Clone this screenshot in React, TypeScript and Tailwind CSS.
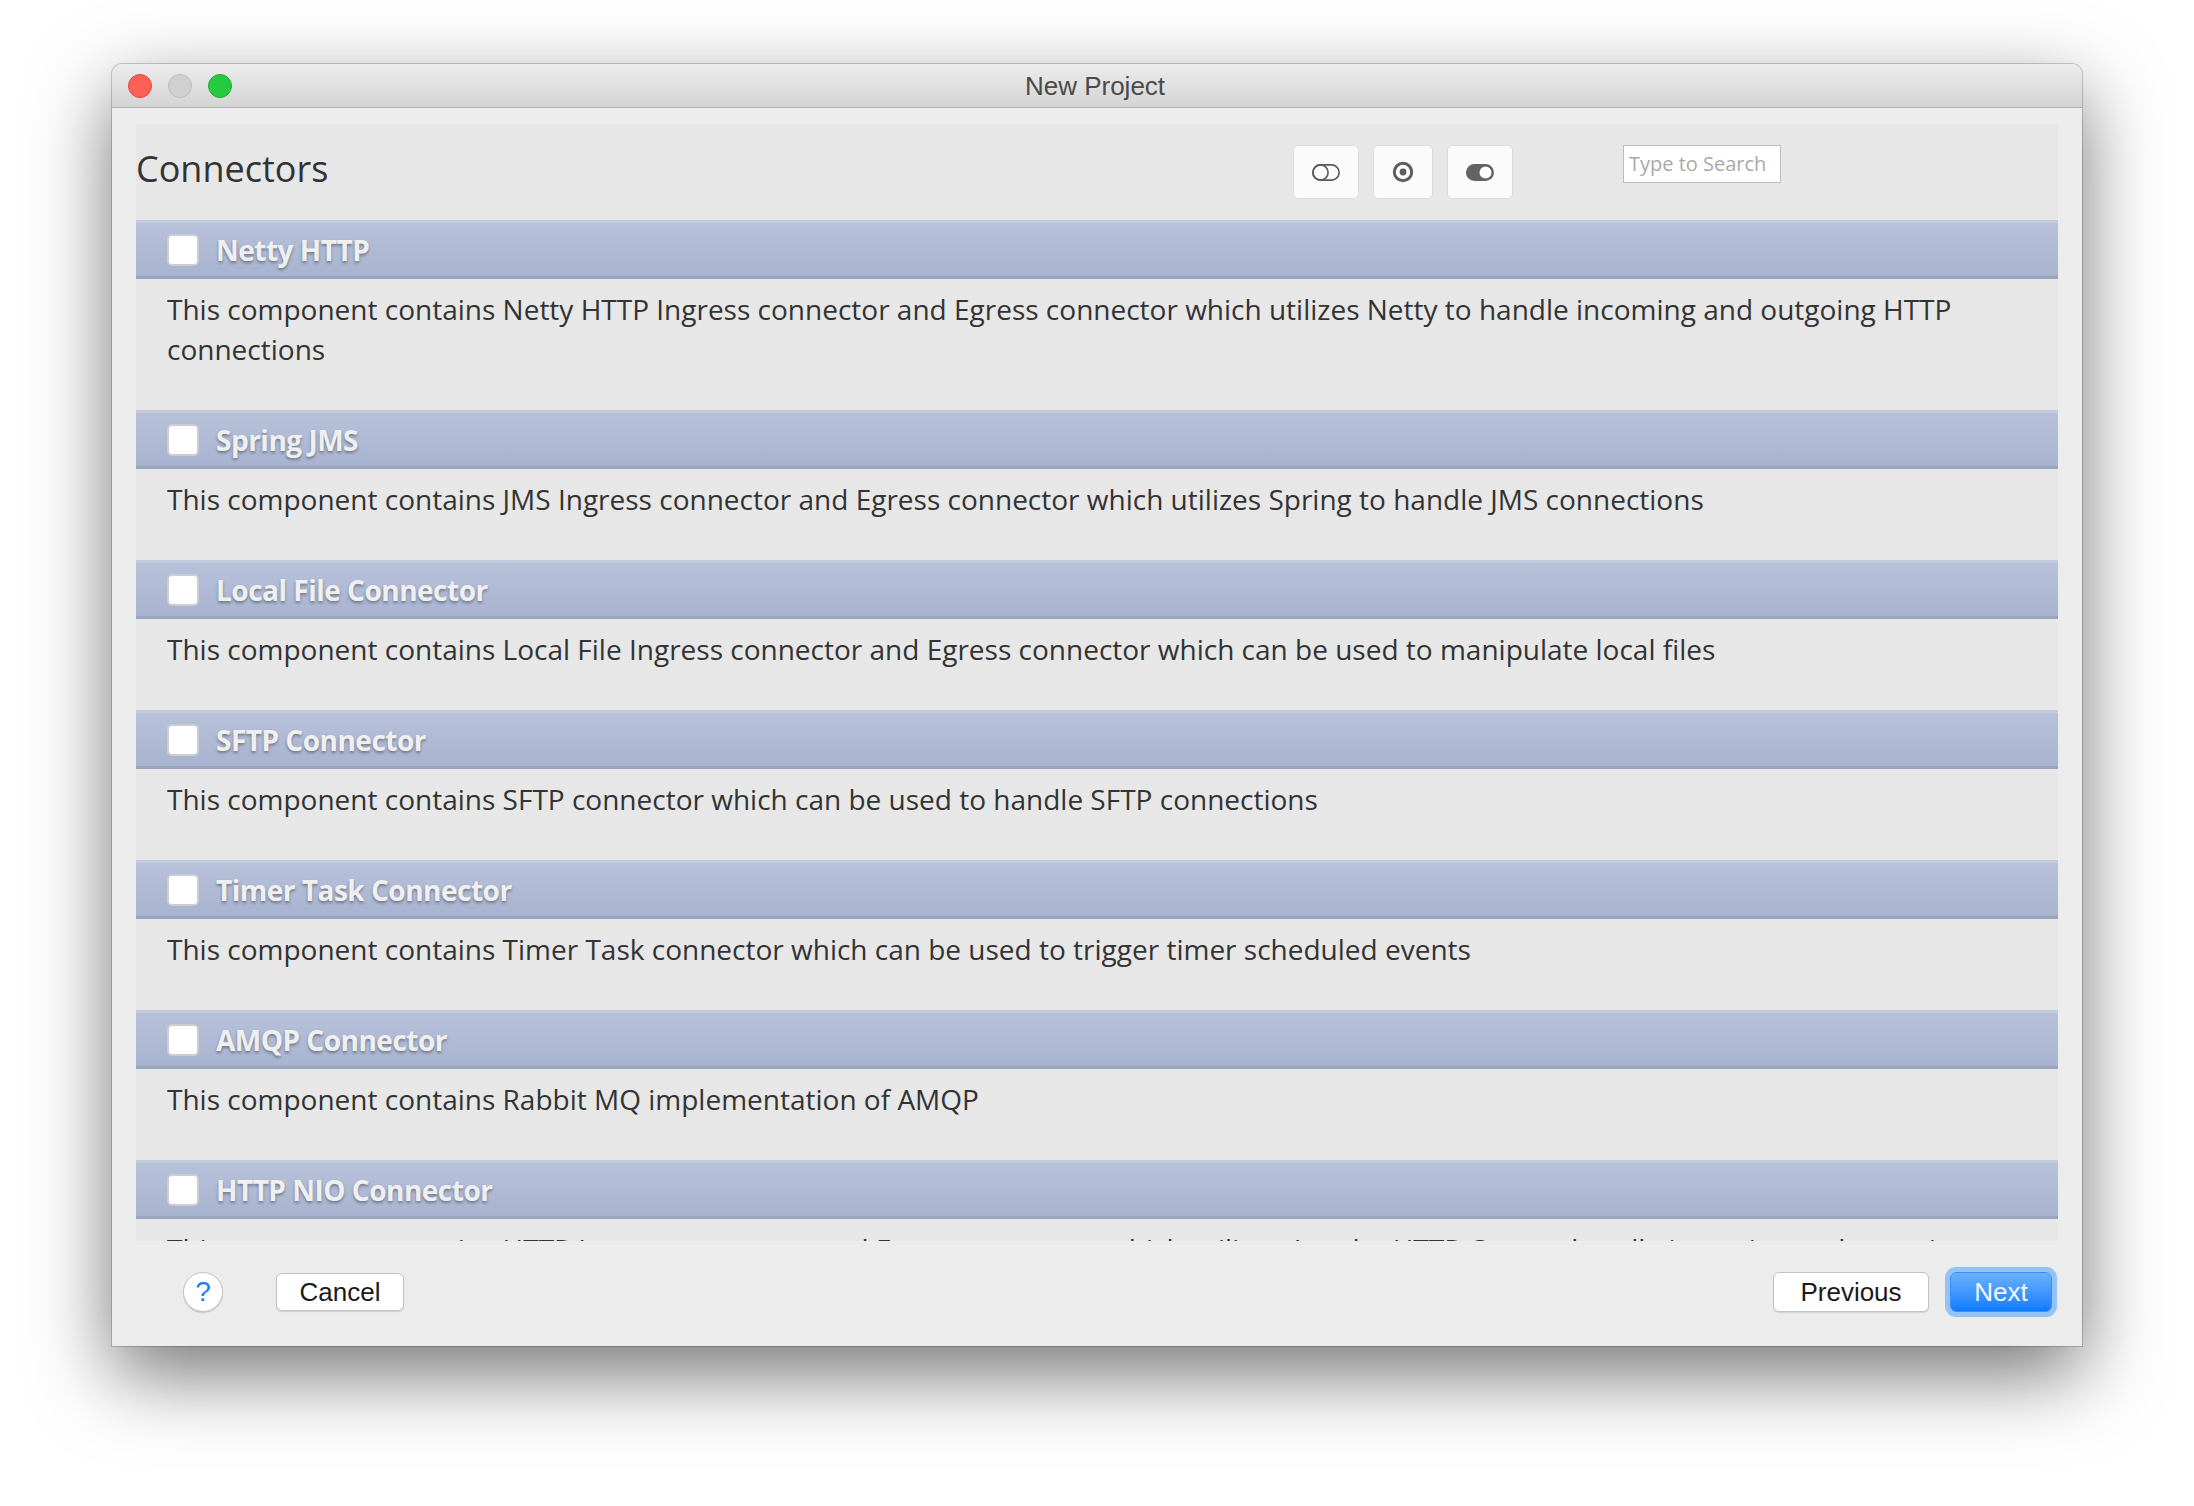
import React from 'react'

interface Connector {
  name: string
  description: string
}

const connectors: Connector[] = [
  {
    name: 'Netty HTTP',
    description:
      'This component contains Netty HTTP Ingress connector and Egress connector which utilizes Netty to handle incoming and outgoing HTTP connections',
  },
  {
    name: 'Spring JMS',
    description:
      'This component contains JMS Ingress connector and Egress connector which utilizes Spring to handle JMS connections',
  },
  {
    name: 'Local File Connector',
    description:
      'This component contains Local File Ingress connector and Egress connector which can be used to manipulate local files',
  },
  {
    name: 'SFTP Connector',
    description: 'This component contains SFTP connector which can be used to handle SFTP connections',
  },
  {
    name: 'Timer Task Connector',
    description: 'This component contains Timer Task connector which can be used to trigger timer scheduled events',
  },
  {
    name: 'AMQP Connector',
    description: 'This component contains Rabbit MQ implementation of AMQP',
  },
  {
    name: 'HTTP NIO Connector',
    description:
      'This component contains HTTP Ingress connector and Egress connector which utilizes Apache HTTP Core to handle incoming and outgoing HTTP connections',
  },
]

function ToggleOffIcon() {
  return (
    <svg width="28" height="17" viewBox="0 0 28 17" fill="none">
      <rect x="0.9" y="0.9" width="26.2" height="15.2" rx="7.6" stroke="#5a5a5a" strokeWidth="1.6" />
      <circle cx="8.5" cy="8.5" r="7.6" stroke="#5a5a5a" strokeWidth="1.6" />
    </svg>
  )
}

function RadioIcon() {
  return (
    <svg width="22" height="22" viewBox="0 0 22 22" fill="none">
      <circle cx="11" cy="11" r="8.7" stroke="#5e5e5e" strokeWidth="3" />
      <circle cx="11" cy="11" r="3.4" fill="#5e5e5e" />
    </svg>
  )
}

function ToggleOnIcon() {
  return (
    <svg width="28" height="17" viewBox="0 0 28 17" fill="none">
      <rect x="0" y="0" width="28" height="17" rx="8.5" fill="#636363" />
      <circle cx="19.5" cy="8.5" r="6.6" fill="#ffffff" stroke="#636363" strokeWidth="1.2" />
    </svg>
  )
}

function ToolButton({ children, wide }: { children: React.ReactNode; wide?: boolean }) {
  return (
    <div
      className={`${wide ? 'w-[66px]' : 'w-[60px]'} h-[54px] flex items-center justify-center bg-[#fbfbfb] border border-[#dcdcdc] rounded-[5px]`}
    >
      {children}
    </div>
  )
}

function ConnectorItem({ connector }: { connector: Connector }) {
  return (
    <div>
      <div className="h-[59px] flex items-center pl-[31px] border-t-[3px] border-t-[#c3cbdf] border-b-[3px] border-b-[#99a4bf] bg-gradient-to-b from-[#b7c1da] to-[#a8b3cf]">
        <div className="w-[32px] h-[32px] bg-white border-2 border-[#cbcdd2] rounded-[5px]" />
        <span className="ml-[17px] text-[28px] leading-[36px] font-bold tracking-[-0.5px] text-[#efefef] [text-shadow:0_2px_3px_rgba(0,0,0,0.35)] font-['Open_Sans',sans-serif]">
          {connector.name}
        </span>
      </div>
      <p className="pl-[31px] pr-[31px] pt-[10px] pb-[41px] text-[28px] leading-[40px] text-[#333333] font-['Open_Sans',sans-serif]">
        {connector.description}
      </p>
    </div>
  )
}

export default function App() {
  return (
    <div className="w-[2194px] h-[1506px] bg-white pt-[64px] pl-[112px] overflow-hidden">
      <div className="w-[1970px] h-[1282px] flex flex-col bg-[#ececec] rounded-t-[10px] shadow-[0_28px_80px_rgba(0,0,0,0.55),0_0_0_1px_rgba(0,0,0,0.18)]">
        {/* title bar */}
        <div className="h-[44px] flex items-center relative rounded-t-[10px] bg-gradient-to-b from-[#ececec] to-[#d4d4d4] border-b border-[#b1b1b1]">
          <div className="flex items-center gap-[16px] pl-[16px]">
            <div className="w-[24px] h-[24px] rounded-full bg-[#fe5f57] border border-[#e0443e]" />
            <div className="w-[24px] h-[24px] rounded-full bg-[#d0d0d0] border border-[#bdbdbd]" />
            <div className="w-[24px] h-[24px] rounded-full bg-[#28c940] border border-[#1dad2b]" />
          </div>
          <div className="flex-1 text-center pr-[124px] pt-[2px] text-[26px] text-[#4a4a4a] font-['Liberation_Sans',sans-serif]">
            New Project
          </div>
        </div>

        {/* body */}
        <div className="flex-1 flex flex-col px-[24px] pt-[16px]">
          <div className="h-[1117px] flex flex-col bg-[#e7e7e7]">
            <div className="h-[96px] shrink-0 flex items-start">
              <h1 className="mt-[27px] text-[36px] leading-[36px] text-[#333333] font-['Open_Sans',sans-serif]">
                Connectors
              </h1>
              <div className="ml-auto mt-[21px] flex gap-[14px]">
                <ToolButton wide>
                  <ToggleOffIcon />
                </ToolButton>
                <ToolButton>
                  <RadioIcon />
                </ToolButton>
                <ToolButton wide>
                  <ToggleOnIcon />
                </ToolButton>
              </div>
              <div className="ml-[110px] mr-[277px] mt-[21px] w-[158px] h-[38px] bg-white border border-[#bdbdbd] flex items-center pl-[5px] text-[20px] text-[#a9a9a9] font-['Open_Sans',sans-serif]">
                Type to Search
              </div>
            </div>
            <div className="flex-1 overflow-hidden">
              {connectors.map((c) => (
                <ConnectorItem key={c.name} connector={c} />
              ))}
            </div>
          </div>

          {/* footer */}
          <div className="flex-1 flex items-center pb-[3px]">
            <div className="ml-[47px] w-[40px] h-[40px] rounded-full bg-white border border-[#c4c4c4] shadow-[0_1px_1px_rgba(0,0,0,0.15)] flex items-center justify-center text-[28px] text-[#1b7ef7] font-['Liberation_Sans',sans-serif]">
              ?
            </div>
            <div className="ml-[53px] w-[128px] h-[38px] rounded-[6px] bg-white border border-[#c3c3c3] shadow-[0_1px_1px_rgba(0,0,0,0.12)] flex items-center justify-center text-[26px] text-[#1a1a1a] font-['Liberation_Sans',sans-serif]">
              Cancel
            </div>
            <div className="ml-auto w-[156px] h-[40px] rounded-[6px] bg-white border border-[#c3c3c3] shadow-[0_1px_1px_rgba(0,0,0,0.12)] flex items-center justify-center text-[26px] text-[#1a1a1a] font-['Liberation_Sans',sans-serif]">
              Previous
            </div>
            <div className="ml-[21px] mr-[6px] w-[102px] h-[40px] rounded-[6px] bg-gradient-to-b from-[#69b1fb] to-[#0a7bff] border border-[#3b8ff5] shadow-[0_0_0_5px_#93c2f6] flex items-center justify-center text-[26px] text-[#f4f8ff] font-['Liberation_Sans',sans-serif]">
              Next
            </div>
          </div>
        </div>
      </div>
    </div>
  )
}
